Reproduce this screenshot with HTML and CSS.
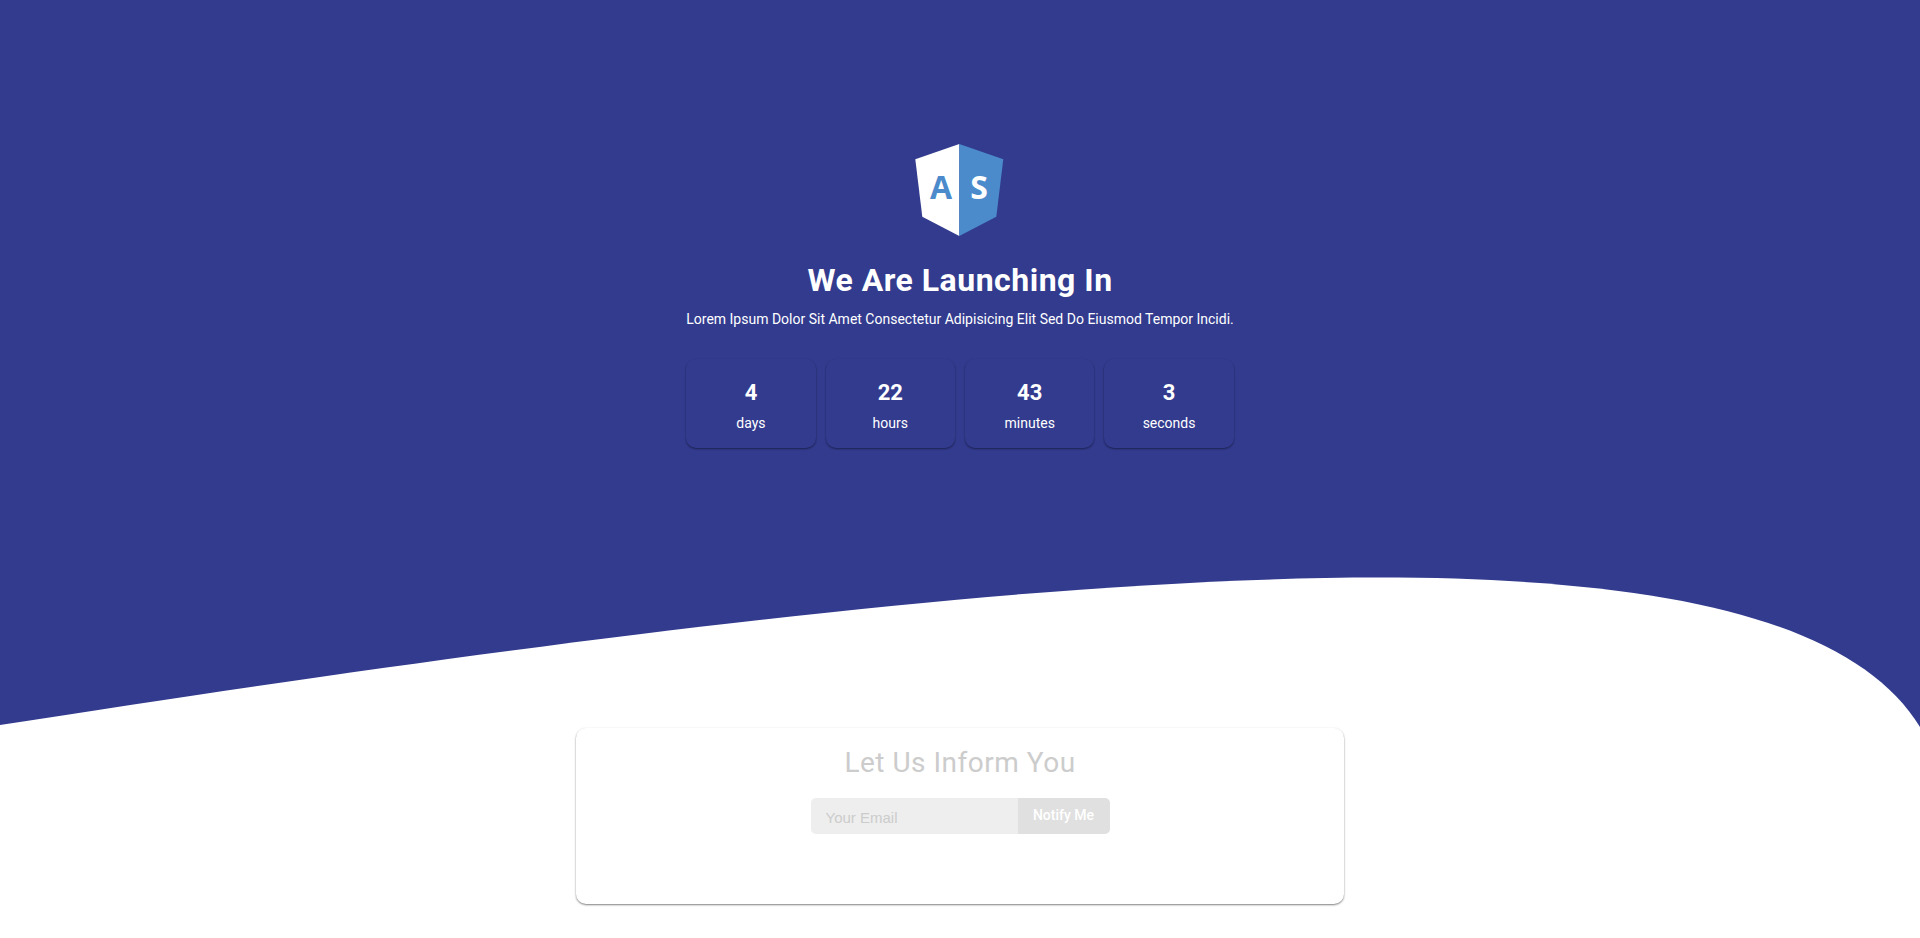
FILE: index.html
```html
<!DOCTYPE html>
<html lang="en">
<head>
<meta charset="utf-8">
<meta name="viewport" content="width=device-width, initial-scale=1">
<title>We Are Launching In</title>
<link rel="stylesheet" href="styles.css">
</head>
<body>
<header class="hero">
  <div class="hero-content">
    <svg class="logo" viewBox="0 0 90 94" role="img" aria-label="AS">
      <path fill="#fff" d="M44.300 1V93L7.300 73.700L0.300 16.200Z"/>
      <path fill="#4b8bcc" d="M44.300 1L88.300 16.200L81.300 73.700L44.300 93Z"/>
      <text class="logo-letter" x="26" y="56" fill="#4b8bcc">A</text>
      <text class="logo-letter" x="64" y="56" fill="#fff">S</text>
    </svg>
    <h1 class="title">We Are Launching In</h1>
    <p class="subtitle">Lorem Ipsum Dolor Sit Amet Consectetur Adipisicing Elit Sed Do Eiusmod Tempor Incidi.</p>
    <div class="countdown">
      <div class="unit"><span class="value">4</span><span class="label">days</span></div>
      <div class="unit"><span class="value">22</span><span class="label">hours</span></div>
      <div class="unit"><span class="value">43</span><span class="label">minutes</span></div>
      <div class="unit"><span class="value">3</span><span class="label">seconds</span></div>
    </div>
  </div>
  <svg class="wave" viewBox="0 0 1920 150" aria-hidden="true">
    <path fill="#fff" d="M0 148C1144 -31 1787 -66 1920 150V151H0Z"/>
  </svg>
</header>
<main class="inform">
  <section class="card">
    <h2 class="card-title">Let Us Inform You</h2>
    <form class="notify">
      <input class="email" type="email" placeholder="Your Email" aria-label="Your Email">
      <button class="send" type="button">Notify Me</button>
    </form>
  </section>
</main>
</body>
</html>
```
FILE: styles.css
```css
* {
  box-sizing: border-box;
}

body {
  margin: 0;
  background: #fff;
  font-family: Roboto, "Liberation Sans", sans-serif;
}

.hero {
  background: #323b8e;
  color: #fff;
}

.hero-content {
  display: flex;
  flex-direction: column;
  align-items: center;
  width: fit-content;
  margin: 0 auto;
  padding: 143px 0 129px;
}

.logo {
  width: 90px;
  height: 94px;
}

.logo-letter {
  font: 700 32px "Open Sans", sans-serif;
  text-anchor: middle;
}

.title {
  margin: 24px 0 0;
  font-size: 32px;
  font-weight: 700;
  line-height: 38px;
  letter-spacing: 0.5px;
}

.subtitle {
  margin: 12px 0 0;
  font-size: 14px;
  font-weight: 400;
  line-height: 16px;
}

.countdown {
  display: grid;
  grid-template-columns: repeat(4, 1fr);
  gap: 10px;
  width: 100%;
  margin-top: 32px;
}

.unit {
  display: flex;
  flex-direction: column;
  align-items: center;
  gap: 7px;
  padding: 20px 10px 16px;
  border-radius: 10px;
  box-shadow: 0 1px 2px rgba(0, 0, 0, 0.45);
}

.value {
  font-size: 22px;
  font-weight: 700;
  line-height: 28px;
}

.label {
  font-size: 14px;
  font-weight: 400;
  line-height: 18px;
}

.wave {
  display: block;
  width: 100%;
}

.card {
  width: 40%;
  min-width: 320px;
  min-height: 176px;
  margin: 1px auto 33px;
  padding: 17px 16px;
  border-radius: 10px;
  box-shadow: 0 1px 2px rgba(0, 0, 0, 0.5);
  text-align: center;
}

.card-title {
  margin: 0;
  color: #ccc;
  font-size: 28px;
  font-weight: 400;
  line-height: 36px;
  letter-spacing: 0.5px;
}

.notify {
  display: flex;
  justify-content: center;
  height: 36px;
  margin-top: 17px;
}

.email {
  width: 207px;
  padding: 2px 15px 0;
  border: 0;
  border-radius: 5px 0 0 5px;
  background: #eee;
  font: 15px "Liberation Sans", Arial, sans-serif;
}

.email::placeholder {
  color: #ccc;
}

.send {
  width: 92px;
  padding: 0 0 2px;
  border: 0;
  border-radius: 0 5px 5px 0;
  background: #e0e0e0;
  color: #fff;
  font: 500 14px Roboto, sans-serif;
}
```
